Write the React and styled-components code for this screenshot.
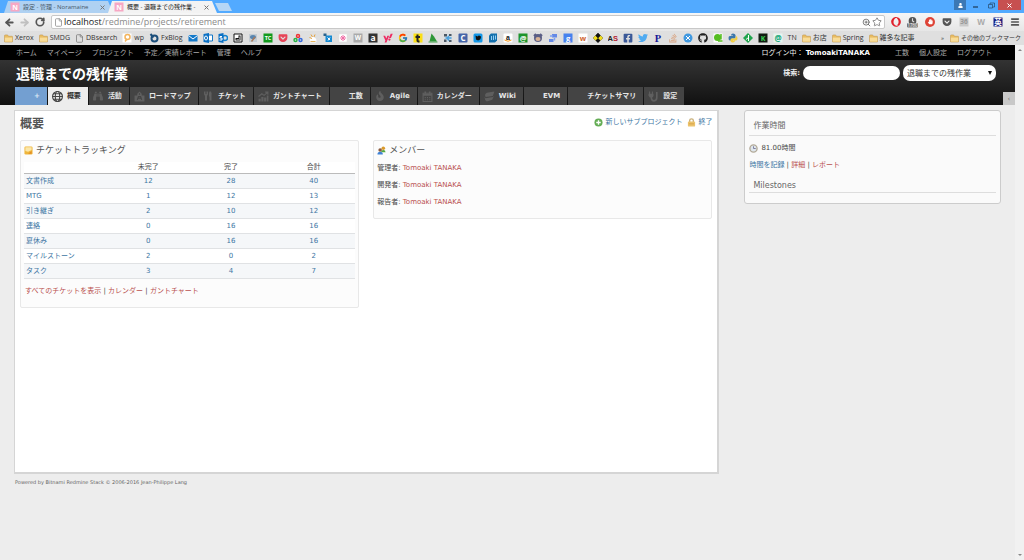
import React from "react";
import styled, { createGlobalStyle, css } from "styled-components";
import {
  FaYahoo,
  FaFacebookSquare,
  FaTwitter,
  FaGithub,
  FaGetPocket,
  FaStackOverflow,
  FaBinoculars,
  FaFire,
  FaOpera,
  FaHandPaper,
  FaUser
} from "react-icons/fa";
import { FcGoogle } from "react-icons/fc";
import { Star, ZoomIn, Menu, RotateCw, ArrowLeft, ArrowRight, File } from "lucide-react";

const GlobalStyle = createGlobalStyle`
  * {
    box-sizing: border-box;
  }

  body {
    margin: 0;
    background: #ededed;
    color: #484848;
    font-family: "DejaVu Sans", "Noto Sans CJK JP", sans-serif;
    font-size: 7px;
    line-height: 10px;
  }

  a {
    text-decoration: none;
  }

  h1, h2, h3, p, ul {
    margin: 0;
    padding: 0;
  }

  button {
    border: 0;
    padding: 0;
    background: none;
    font: inherit;
    color: inherit;
  }
`;

const Window = styled.div`
  display: flex;
  flex-direction: column;
  min-height: 100vh;
`;

/* browser chrome */

const Chrome = styled.header`
  font-family: "Open Sans", "Noto Sans CJK JP", sans-serif;
  color: #333;
`;

const TabStrip = styled.div`
  display: flex;
  align-items: flex-start;
  height: 13px;
  padding-left: 4px;
  background: #52aaff;
`;

const BrowserTab = styled.div`
  display: flex;
  align-items: center;
  gap: 3px;
  width: 109px;
  height: 12px;
  margin: 1px -5px 0 0;
  padding: 0 8px 0 6px;
  background: ${props => (props.$active ? "#f3f3f3" : "#afd1f2")};
  color: ${props => (props.$active ? "#222" : "#46586a")};
  clip-path: polygon(4px 0, calc(100% - 5px) 0, 100% 100%, 0 100%);
  font-size: 6px;

  span {
    flex: 1;
    white-space: nowrap;
  }

  svg {
    flex: none;
  }
`;

const NewTab = styled.button`
  width: 17px;
  height: 8px;
  margin: 3px 0 0 3px;
  background: #b5d6f5;
  clip-path: polygon(0 0, 13px 0, 100% 100%, 4px 100%);
`;

const WindowButtons = styled.div`
  display: flex;
  margin-left: auto;
  margin-right: 3px;
`;

const WindowButton = styled.button`
  display: flex;
  align-items: center;
  justify-content: center;
  width: ${props => props.$width || 14}px;
  height: 10px;
  background: ${props => props.$color || "none"};
  color: #fff;
`;

const Toolbar = styled.div`
  display: flex;
  align-items: center;
  height: 18px;
  padding: 0 4px;
  background: linear-gradient(#f6f6f6, #e6e6e6);
`;

const NavButtons = styled.div`
  display: flex;
  gap: 4px;
  margin-right: 6px;
`;

const ToolButton = styled.button`
  display: flex;
  width: 11px;
  height: 11px;
  align-items: center;
  justify-content: center;
  color: ${props => props.$color || "#555"};
`;

const AddressBar = styled.div`
  display: flex;
  flex: 1;
  align-items: center;
  gap: 1px;
  height: 14px;
  padding: 0 2px;
  background: #fff;
  border: 1px solid #c8c8c8;
  border-radius: 2px;
`;

const Address = styled.div`
  flex: 1;
  font-size: 9px;
  line-height: 12px;
  color: #8a8a8a;

  b {
    font-weight: normal;
    color: #222;
  }
`;

const Extensions = styled.div`
  display: flex;
  align-items: center;
  gap: 6px;
  margin-left: 5px;
`;

const BookmarkBar = styled.nav`
  display: flex;
  align-items: center;
  height: 14px;
  padding: 0 3px 0 4px;
  background: #dfdfdf;
`;

const Bookmark = styled.a`
  display: flex;
  align-items: center;
  gap: 2px;
  margin-right: 5px;
  color: #333;
  white-space: nowrap;

  svg {
    flex: none;
  }
`;

const MoreBookmarks = styled.div`
  display: flex;
  align-items: center;
  gap: 6px;
  margin-left: auto;
  font-size: 6px;

  ${Bookmark} {
    margin: 0;
  }
`;

/* page */

const Viewport = styled.div`
  display: flex;
  flex: 1;
`;

const Page = styled.div`
  flex: 1;
  min-width: 0;
`;

const Scrollbar = styled.div`
  display: flex;
  flex-direction: column;
  justify-content: space-between;
  align-items: center;
  width: 9px;
  padding: 3px 0;
  background: #f1f1f1;
`;

const TopMenu = styled.div`
  display: flex;
  align-items: center;
  height: 15px;
  padding: 0 23px 0 16px;
  background: #000;
  color: #eee;

  a {
    color: #aaa;
  }
`;

const MenuLinks = styled.nav`
  display: flex;
  gap: 10px;
`;

const Account = styled.div`
  margin-left: auto;
  margin-right: 25px;

  a {
    color: #fff;
    font-weight: bold;
  }
`;

const Header = styled.header`
  display: flex;
  flex-direction: column;
  justify-content: space-between;
  height: 45px;
  padding: 5px 0 0 15px;
  background: linear-gradient(#333, #111);
`;

const HeaderTop = styled.div`
  display: flex;
  justify-content: space-between;
  align-items: flex-start;
  padding-right: 19px;

  h1 {
    padding-left: 1px;
    font-size: 14px;
    line-height: 18px;
    color: #fff;
  }
`;

const Search = styled.form`
  display: flex;
  align-items: center;
  gap: 3px;

  label {
    color: #eee;
    font-weight: bold;
  }

  input {
    width: 97px;
    height: 14px;
    padding: 0 5px;
    border: 0;
    border-radius: 7px;
    background: #fff;
    font-size: 8px;
  }
`;

const SelectBox = styled.div`
  display: grid;
  align-items: center;

  select,
  svg {
    grid-area: 1 / 1;
  }

  select {
    appearance: none;
    width: 93px;
    height: 16px;
    padding: 0 4px;
    border: 0;
    border-radius: 7px;
    background: #fff;
    color: #333;
    font-family: "Noto Sans CJK JP", sans-serif;
    font-size: 8px;
    line-height: 12px;
  }

  svg {
    justify-self: end;
    margin-right: 4px;
  }
`;

const HeaderBottom = styled.div`
  display: flex;
  justify-content: space-between;
  align-items: flex-end;
`;

const ProjectMenu = styled.nav`
  display: flex;
  gap: 1px;
`;

const tabColors = {
  add: css`
    background: #739fd1;
    color: #dce8f5;
  `,
  active: css`
    background: #ededed;
    color: #333;
  `,
  normal: css`
    background: #444;
    color: #e6e6e6;
  `
};

const ProjectTab = styled.a`
  display: flex;
  align-items: center;
  gap: 3px;
  height: 18px;
  padding: 0 7px 0 4px;
  font-weight: bold;
  white-space: nowrap;
  ${props => tabColors[props.$kind || "normal"]}
`;

const TabIcon = styled.span`
  display: flex;
  width: 12px;
  color: ${props => (props.$active ? "#444" : "#5f5f5f")};
`;

const Collapse = styled.button`
  width: 12px;
  height: 13px;
  background: #c8c8c8;
  color: #777;
`;

const Columns = styled.div`
  display: flex;
  align-items: flex-start;
  gap: 25px;
  padding: 5px 14px 0;
`;

const Content = styled.main`
  flex: 1;
  min-height: 364px;
  padding: 5px;
  background: #fff;
  border: 1px solid #d5d5d5;
  border-right-width: 2px;
  border-bottom-width: 2px;
`;

const ContentHead = styled.div`
  display: flex;
  justify-content: space-between;
  align-items: flex-start;
  height: 24px;

  h2 {
    padding-top: 1px;
    font-size: 12px;
    line-height: 15px;
    color: #555;
  }
`;

const Contextual = styled.div`
  display: flex;
  gap: 5px;
  padding-top: 1px;
`;

const Link = styled.a`
  color: ${props => (props.$visited ? "#b9504f" : "#3d76a3")};
`;

const IconLink = styled(Link)`
  display: flex;
  align-items: center;
  gap: 2px;
`;

const Boxes = styled.div`
  display: grid;
  grid-template-columns: 1fr 1fr;
  align-items: start;
  gap: 14px;
`;

const Box = styled.section`
  padding: 3px 3px 11px;
  background: #fcfcfc;
  border: 1px solid #e8e8e8;
  border-radius: 2px;

  h3 {
    display: flex;
    align-items: center;
    gap: 3px;
    font-size: 9px;
    line-height: 12px;
    font-weight: normal;
    color: #555;
  }
`;

const Tracking = styled.table`
  width: 100%;
  margin-top: 6px;
  border-collapse: collapse;
  table-layout: fixed;
  text-align: center;

  th,
  td {
    padding: 0 2px;
    font-weight: normal;
  }

  thead tr {
    height: 11px;
    background: #fff;
    border-bottom: 1px solid #bbb;
  }

  tbody tr {
    height: 15px;
    background: #fff;
    border-bottom: 1px solid #e0e2e4;
  }

  tbody tr:nth-child(odd) {
    background: #f5f7f9;
  }

  tbody th {
    text-align: left;
    white-space: nowrap;
  }
`;

const BoxLinks = styled.p`
  padding: 7px 1px 0;
`;

const Member = styled.p`
  padding: 7px 0 0;
`;

const Sidebar = styled.aside`
  flex: 0 0 26%;
  padding: 9px 4px 10px;
  background: #fafafa;
  border: 1px solid #ccc;
  border-radius: 3px;

  h3 {
    padding: 0 4px 3px;
    font-size: 8px;
    line-height: 12px;
    font-weight: normal;
    color: #666;
    border-bottom: 1px solid #ddd;
  }

  h3 + p {
    margin-top: 7px;
  }

  p + h3 {
    margin-top: 10px;
    padding-bottom: 0;
  }
`;

const Hours = styled.p`
  display: flex;
  align-items: center;
  gap: 3px;
`;

const TimeLinks = styled.p`
  margin-top: 7px;
`;

const Footer = styled.footer`
  padding: 3px 15px;
  font-size: 5px;
  color: #666;
`;

/* icons */

const Icon = ({ size = 10, box = 20, children }) => (
  <svg width={size} height={size} viewBox={`0 0 ${box} ${box}`} aria-hidden="true">
    {children}
  </svg>
);

const Letter = ({ bg, color = "#fff", family = "Open Sans", round = 0, size = 16, children }) => (
  <Icon>
    <rect x="1" y="1" width="18" height="18" rx={round} fill={bg} />
    <text
      x="10"
      y={10 + size * 0.36}
      textAnchor="middle"
      fontSize={size}
      fontWeight="bold"
      fontFamily={family}
      fill={color}
    >
      {children}
    </text>
  </Icon>
);

const Folder = () => (
  <Icon size={9}>
    <path d="M1 4q0-2 2-2h5l2 3h8q1 0 1 1v11q0 1-1 1H2q-1 0-1-1z" fill="#e9bd62" stroke="#b98b3c" />
    <path d="M2 8h16v9H2z" fill="#f8dc98" />
  </Icon>
);

const Noramaine = () => (
  <Letter bg="#f7a8c4" size={14}>
    N
  </Letter>
);

const CloseMark = ({ color = "#777" }) => (
  <Icon size={5} box={10}>
    <path d="M1 1l8 8M9 1l-8 8" stroke={color} strokeWidth="2" />
  </Icon>
);

const Badge = () => (
  <Icon size={12}>
    <circle cx="10" cy="8" r="7" fill="#555" />
    <path d="M10 3v5l3 2" stroke="#ddd" strokeWidth="2" fill="none" />
    <rect x="0" y="12" width="20" height="8" rx="2" fill="#777" />
    <text x="10" y="19" fontSize="8" textAnchor="middle" fill="#fff" fontFamily="Open Sans">
      1760
    </text>
  </Icon>
);

const bookmarks = [
  { text: "Xerox", icon: <Folder /> },
  { text: "SMDG", icon: <Folder /> },
  { text: "DBsearch", icon: <File size={9} color="#777" /> },
  {
    text: "wp",
    icon: (
      <Icon>
        <path d="M1 1h18v18H1z" fill="#fff" />
        <circle cx="11" cy="8" r="5" fill="none" stroke="#f3b45d" strokeWidth="3" />
        <path d="M6 17l4-5" stroke="#f3b45d" strokeWidth="3" />
      </Icon>
    )
  },
  {
    text: "FxBlog",
    icon: (
      <Icon>
        <circle cx="11" cy="11" r="6" fill="none" stroke="#1d4f7b" strokeWidth="4" />
        <path d="M3 2l6 7" stroke="#1d4f7b" strokeWidth="4" />
      </Icon>
    )
  },
  {
    icon: (
      <Icon>
        <path d="M1 4h18v13H1z" fill="#1479c9" />
        <path d="M1 5l9 7 9-7" stroke="#fff" strokeWidth="2" fill="none" />
      </Icon>
    )
  },
  {
    icon: (
      <Icon>
        <path d="M9 4h10v12H9z" fill="#fff" stroke="#1376c5" strokeWidth="2" />
        <path d="M1 2l11-2v20L1 18z" fill="#0b70c4" />
        <ellipse cx="6" cy="10" rx="3" ry="4" fill="none" stroke="#fff" strokeWidth="2" />
      </Icon>
    )
  },
  {
    icon: (
      <Icon>
        <circle cx="14" cy="10" r="5" fill="none" stroke="#1685d1" strokeWidth="3" />
        <path d="M1 2l10-2v20L1 18z" fill="#0b70c4" />
        <path d="M8 7H4v3h4v4H3" fill="none" stroke="#fff" strokeWidth="2" />
      </Icon>
    )
  },
  {
    icon: (
      <Icon>
        <path d="M2 2h16v16H2z" fill="#fff" stroke="#111" strokeWidth="2" />
        <path d="M5 15h10V5h-4v5H5z" fill="#111" />
        <path d="M7 13h6M13 7v6" stroke="#fff" />
      </Icon>
    )
  },
  {
    icon: (
      <Icon>
        <path d="M2 2h16v16H2z" fill="#c3ccd4" />
        <ellipse cx="10" cy="8" rx="6" ry="4" fill="#5885b0" />
        <path d="M7 17L14 8" stroke="#a8795a" strokeWidth="3" />
      </Icon>
    )
  },
  { icon: <Letter bg="#129a1d" size={11}>TC</Letter> },
  { icon: <FaGetPocket size={10} color="#e74457" /> },
  {
    icon: (
      <Icon>
        <circle cx="10" cy="6" r="3" fill="none" stroke="#e33" strokeWidth="3" />
        <circle cx="5" cy="14" r="3" fill="none" stroke="#29b345" strokeWidth="3" />
        <circle cx="15" cy="14" r="3" fill="none" stroke="#3569dc" strokeWidth="3" />
      </Icon>
    )
  },
  {
    icon: (
      <Icon>
        <path d="M4 19q-2-9 4-12l5 2q6 4 3 10z" fill="#fff" />
        <path d="M3 9l5 2M6 3l3 5M14 3l-2 5" stroke="#e4a13c" strokeWidth="2" />
        <path d="M5 17h10" stroke="#e9b65f" strokeWidth="2" />
      </Icon>
    )
  },
  {
    icon: (
      <Icon>
        <path d="M5 5h13v13H5z" fill="#168ad2" />
        <path d="M1 1h6v5H1z" fill="#2b638c" />
        <path d="M9 9l5 5M14 9l-4 6" stroke="#fff" strokeWidth="2" />
      </Icon>
    )
  },
  {
    icon: (
      <Icon>
        <path d="M2 2h16v16H2z" fill="#fff" stroke="#ddd" />
        <path d="M10 4v12M4 10h12M6 6l8 8M14 6l-8 8" stroke="#f06da5" strokeWidth="2" />
      </Icon>
    )
  },
  { icon: <Letter bg="#aaa" size={13}>W</Letter> },
  { icon: <Letter bg="#333" size={17}>a</Letter> },
  { icon: <FaYahoo size={10} color="#ed2b63" /> },
  { icon: <FcGoogle size={10} /> },
  {
    icon: (
      <Icon>
        <path d="M1 1h18v18H1z" fill="#fbdf15" />
        <path d="M9 3v12q0 2 4 2M5 8h9" stroke="#222" strokeWidth="4" fill="none" />
      </Icon>
    )
  },
  {
    icon: (
      <Icon>
        <path d="M3 17L7 1l5 6 6 10z" fill="#2e9738" />
        <path d="M1 18h18" stroke="#49a34e" strokeWidth="2" />
      </Icon>
    )
  },
  {
    icon: (
      <Icon>
        <path d="M2 2h16v16H2z" fill="#cfdbe4" />
        <path d="M2 2h6v5H2zM12 2h5v4h-5zM2 13h5v5H2zM12 14h5v4h-5z" fill="#4c5864" />
        <path d="M5 10h12M12 6l-4 4 4 5" stroke="#49a0dd" strokeWidth="3" fill="none" />
      </Icon>
    )
  },
  { icon: <Letter bg="#4564a8" round={2}>C</Letter> },
  {
    icon: (
      <Icon>
        <rect x="1" y="1" width="18" height="18" rx="3" fill="#1698e8" />
        <path d="M5 5l4 2q3-3 5-1l2 1q0 7-6 8l-4-2z" fill="#111" />
      </Icon>
    )
  },
  {
    icon: (
      <Icon>
        <path d="M6 1h12v14l-4 4H2V5z" fill="#1470ad" />
        <path d="M7 6v8M11 5v9M15 5v8" stroke="#94cef2" strokeWidth="2" />
      </Icon>
    )
  },
  {
    icon: (
      <Icon>
        <rect x="1" y="1" width="18" height="18" rx="2" fill="#fff" />
        <text
          x="10"
          y="13"
          fontSize="14"
          fontWeight="bold"
          fontFamily="Liberation Sans"
          textAnchor="middle"
          fill="#111"
        >
          a
        </text>
        <path d="M3 14q7 5 14 0" stroke="#f69a1d" strokeWidth="2" fill="none" />
      </Icon>
    )
  },
  { icon: <Letter bg="#1d942b" size={15}>@</Letter> },
  {
    icon: (
      <Icon>
        <circle cx="10" cy="10" r="8" fill="#5b5f86" />
        <ellipse cx="10" cy="12" rx="5" ry="4" fill="#d9b395" />
        <path d="M2 6l4-4M18 6l-4-4" stroke="#5b5f86" strokeWidth="4" />
      </Icon>
    )
  },
  {
    icon: (
      <Icon>
        <path d="M8 2h10v7H8zM2 12h9v6H2z" fill="#6489e5" />
        <path d="M4 6h6M13 10v5" stroke="#7da1f4" strokeWidth="3" />
      </Icon>
    )
  },
  { icon: <Letter bg="#4782ee" size={15}>g</Letter> },
  { icon: <Letter bg="#fff" color="#cf642d" size={15}>w</Letter> },
  {
    icon: (
      <Icon>
        <path d="M10 0l10 10-10 10L0 10z" fill="#111" />
        <path d="M10 10l5-5 5 5-5 5zM5 5l5 5-5 5-5-5z" fill="#f1dc19" />
        <path d="M10 0l5 5-5 5-5-5z" fill="#111" />
      </Icon>
    )
  },
  {
    icon: (
      <Icon>
        <text x="-1" y="16" fontSize="15" fontWeight="bold" fontFamily="Liberation Sans" fill="#222">
          A<tspan fill="#b2202f">S</tspan>
        </text>
      </Icon>
    )
  },
  { icon: <FaFacebookSquare size={10} color="#3b5998" /> },
  { icon: <FaTwitter size={10} color="#50abf1" /> },
  {
    icon: (
      <Letter bg="none" color="#171796" family="Liberation Serif" size={21}>
        P
      </Letter>
    )
  },
  { icon: <FaStackOverflow size={10} color="#d9a27e" /> },
  {
    icon: (
      <Icon>
        <circle cx="10" cy="10" r="9" fill="#3f98e0" />
        <path d="M6 6l8 8M14 6l-8 8" stroke="#fff" strokeWidth="2" />
      </Icon>
    )
  },
  { icon: <FaGithub size={10} color="#222" /> },
  {
    icon: (
      <Icon>
        <rect x="1" y="1" width="18" height="18" fill="#fff" />
        <circle cx="9" cy="9" r="7" fill="#55bd20" />
        <path d="M10 16h9M16 2v11" stroke="#55bd20" strokeWidth="3" />
      </Icon>
    )
  },
  {
    icon: (
      <Icon>
        <path d="M6 5q0-4 4-4t5 3v5q0 2-3 2H8q-2 0-2 4H4q-3 0-3-5t4-4h5V5z" fill="#3b77ab" />
        <path d="M14 15q0 4-4 4t-5-3v-3q0-2 3-2h5q3 0 3-5 3 0 3 5t-4 4h-5v1z" fill="#f3cf43" />
      </Icon>
    )
  },
  {
    icon: (
      <Icon>
        <path d="M10 0l10 10-10 10L0 10z" fill="#20a44d" />
        <path d="M11 4v12M11 9l-5 4" stroke="#fff" strokeWidth="2" />
      </Icon>
    )
  },
  { icon: <Letter bg="#121c12" color="#38d154" size={14}>K</Letter> },
  { icon: <Letter bg="#e7f5ef" color="#16a679" size={16}>@</Letter> },
  { text: "TN" },
  { text: "お店", icon: <Folder /> },
  { text: "Spring", icon: <Folder /> },
  { text: "雑多な記事", icon: <Folder /> }
];

const tabIcons = {
  globe: (
    <Icon size={11}>
      <g fill="none" stroke="currentColor" strokeWidth="2">
        <circle cx="10" cy="10" r="9" />
        <ellipse cx="10" cy="10" rx="4" ry="9" />
        <path d="M1 10h18M3 5h14M3 15h14" />
      </g>
    </Icon>
  ),
  binoculars: <FaBinoculars size={10} />,
  road: (
    <Icon size={11}>
      <path d="M1 8h5V5l4-4 4 4v3h5v11H1z" fill="currentColor" />
      <path d="M10 4v3M6 16l2-6h4l2 6M8 13h4" stroke="#444" strokeWidth="2" fill="none" />
    </Icon>
  ),
  tools: (
    <Icon size={10}>
      <path
        d="M2 1v5q0 3 2 3v10h4V9q2 0 2-3V1H8v5H7V1H5v5H4V1zM13 1h3q2 3 1 9v9h-4v-8h-1V4z"
        fill="currentColor"
      />
    </Icon>
  ),
  chart: (
    <Icon size={11}>
      <path d="M1 14h4v5H1zM6 11h4v8H6zM11 12h4v7h-4zM16 8h3v11h-3z" fill="currentColor" />
      <path d="M1 10l6-5 4 3 7-6M13 2h5v5" stroke="currentColor" strokeWidth="2" fill="none" />
    </Icon>
  ),
  fire: <FaFire size={10} />,
  calendar: (
    <Icon size={11}>
      <path d="M2 4h16v15H2z" fill="none" stroke="currentColor" strokeWidth="2" />
      <path d="M2 7h16M6 1v4M14 1v4" stroke="currentColor" strokeWidth="3" />
      <path d="M5 12h10M5 16h10" stroke="currentColor" strokeWidth="2" strokeDasharray="2 2" />
    </Icon>
  ),
  wiki: (
    <Icon size={11}>
      <path d="M5 3l14-2-3 8-13 2q-3-5 2-8zM1 11l2 2 13-2 2-2-3 7-10 3q-4-2-4-8z" fill="currentColor" />
    </Icon>
  ),
  plug: (
    <Icon size={11}>
      <path d="M3 1v5M8 1v5" stroke="currentColor" strokeWidth="2" />
      <path d="M1 5h9v3q0 4-4 4T1 8z" fill="currentColor" />
      <path d="M6 11q0 7 5 7t5-6V2" stroke="currentColor" strokeWidth="3" fill="none" />
    </Icon>
  )
};

const projectTabs = [
  { label: "+", kind: "add" },
  { label: "概要", icon: "globe", kind: "active" },
  { label: "活動", icon: "binoculars" },
  { label: "ロードマップ", icon: "road" },
  { label: "チケット", icon: "tools" },
  { label: "ガントチャート", icon: "chart" },
  { label: "工数" },
  { label: "Agile", icon: "fire" },
  { label: "カレンダー", icon: "calendar" },
  { label: "Wiki", icon: "wiki" },
  { label: "EVM" },
  { label: "チケットサマリ" },
  { label: "設定", icon: "plug" }
];

const trackers = [
  ["文書作成", 12, 28, 40],
  ["MTG", 1, 12, 13],
  ["引き継ぎ", 2, 10, 12],
  ["連絡", 0, 16, 16],
  ["夏休み", 0, 16, 16],
  ["マイルストーン", 2, 0, 2],
  ["タスク", 3, 4, 7]
];

const BrowserChrome = () => (
  <Chrome>
    <TabStrip>
      <BrowserTab>
        <Noramaine />
        <span>設定 - 管理 - Noramaine</span>
        <CloseMark />
      </BrowserTab>
      <BrowserTab $active>
        <Noramaine />
        <span>概要 - 退職までの残作業 -</span>
        <CloseMark />
      </BrowserTab>
      <NewTab aria-label="New tab" />
      <WindowButtons>
        <WindowButton aria-label="User" $color="#3c78b4" $width={12}>
          <FaUser size={5} />
        </WindowButton>
        <WindowButton aria-label="Minimize" $width={18}>
          <Icon size={5} box={5}>
            <path d="M0 4h5" stroke="#123" strokeWidth="1" />
          </Icon>
        </WindowButton>
        <WindowButton aria-label="Restore">
          <Icon size={7} box={14}>
            <path d="M4 4V2h9v8h-3M1 5h8v7H1z" stroke="#123" strokeWidth="1" fill="none" />
          </Icon>
        </WindowButton>
        <WindowButton aria-label="Close" $color="#c75050" $width={23}>
          <CloseMark color="#fff" />
        </WindowButton>
      </WindowButtons>
    </TabStrip>
    <Toolbar>
      <NavButtons>
        <ToolButton aria-label="Back">
          <ArrowLeft size={11} strokeWidth={4} />
        </ToolButton>
        <ToolButton aria-label="Forward" $color="#c0c0c0">
          <ArrowRight size={11} strokeWidth={4} />
        </ToolButton>
        <ToolButton aria-label="Reload">
          <RotateCw size={10} strokeWidth={4} />
        </ToolButton>
      </NavButtons>
      <AddressBar>
        <File size={9} color="#888" />
        <Address>
          <b>localhost</b>/redmine/projects/retirement
        </Address>
        <ZoomIn size={9} color="#555" />
        <Star size={10} color="#777" />
      </AddressBar>
      <Extensions>
        <ToolButton aria-label="Opera" $color="#e0202c">
          <FaOpera size={10} />
        </ToolButton>
        <ToolButton aria-label="Clock">
          <Badge />
        </ToolButton>
        <ToolButton aria-label="Block">
          <Icon>
            <circle cx="10" cy="10" r="10" fill="#de4437" />
            <FaHandPaper x="5" y="4" size={11} color="#fff" />
          </Icon>
        </ToolButton>
        <ToolButton aria-label="Pocket">
          <FaGetPocket size={10} />
        </ToolButton>
        <ToolButton aria-label="Feeds">
          <Letter bg="#c9c9c9" color="#999" size={13}>
            36
          </Letter>
        </ToolButton>
        <ToolButton aria-label="Wiki">
          <Letter bg="none" color="#aaa" size={16}>
            W
          </Letter>
        </ToolButton>
        <ToolButton aria-label="Dictionary">
          <Letter bg="#1c2180" size={15} family="Noto Sans CJK JP">
            英
          </Letter>
        </ToolButton>
        <ToolButton aria-label="Menu">
          <Menu size={10} strokeWidth={4} />
        </ToolButton>
      </Extensions>
    </Toolbar>
    <BookmarkBar>
      {bookmarks.map(({ text, icon }, i) => (
        <Bookmark href="#" key={i}>
          {icon}
          {text}
        </Bookmark>
      ))}
      <MoreBookmarks>
        <span>»</span>
        <Bookmark href="#">
          <Folder />
          その他のブックマーク
        </Bookmark>
      </MoreBookmarks>
    </BookmarkBar>
  </Chrome>
);

const PageHeader = () => (
  <>
    <TopMenu>
      <MenuLinks>
        <a href="#">ホーム</a>
        <a href="#">マイページ</a>
        <a href="#">プロジェクト</a>
        <a href="#">予定／実績レポート</a>
        <a href="#">管理</a>
        <a href="#">ヘルプ</a>
      </MenuLinks>
      <Account>
        ログイン中： <a href="#">TomoakiTANAKA</a>
      </Account>
      <MenuLinks>
        <a href="#">工数</a>
        <a href="#">個人設定</a>
        <a href="#">ログアウト</a>
      </MenuLinks>
    </TopMenu>
    <Header>
      <HeaderTop>
        <h1>退職までの残作業</h1>
        <Search>
          <label htmlFor="q">検索:</label>
          <input id="q" type="text" />
          <SelectBox>
            <select aria-label="プロジェクト">
              <option>退職までの残作業</option>
            </select>
            <Icon size={4} box={4}>
              <path d="M0 0h4L2 4z" fill="#111" />
            </Icon>
          </SelectBox>
        </Search>
      </HeaderTop>
      <HeaderBottom>
        <ProjectMenu>
          {projectTabs.map(tab => (
            <ProjectTab href="#" key={tab.label} $kind={tab.kind}>
              <TabIcon $active={tab.kind === "active"}>{tabIcons[tab.icon]}</TabIcon>
              {tab.label}
            </ProjectTab>
          ))}
        </ProjectMenu>
        <Collapse aria-label="サイドバー">‹</Collapse>
      </HeaderBottom>
    </Header>
  </>
);

const IssueTracking = () => (
  <Box>
    <h3>
      <Icon size={9}>
        <rect x="1" y="1" width="18" height="18" rx="3" fill="#efb63c" />
        <path d="M3 3h14v6l-8 4-6-2z" fill="#fbe7a9" />
        <path d="M9 17l8-6v6z" fill="#e28b25" />
      </Icon>
      チケットトラッキング
    </h3>
    <Tracking>
      <thead>
        <tr>
          <td />
          <th scope="col">未完了</th>
          <th scope="col">完了</th>
          <th scope="col">合計</th>
        </tr>
      </thead>
      <tbody>
        {trackers.map(([name, ...counts]) => (
          <tr key={name}>
            <th scope="row">
              <Link href="#">{name}</Link>
            </th>
            {counts.map((count, i) => (
              <td key={i}>
                <Link href="#">{count}</Link>
              </td>
            ))}
          </tr>
        ))}
      </tbody>
    </Tracking>
    <BoxLinks>
      <Link href="#" $visited>すべてのチケットを表示</Link> |{" "}
      <Link href="#" $visited>カレンダー</Link> |{" "}
      <Link href="#" $visited>ガントチャート</Link>
    </BoxLinks>
  </Box>
);

const Members = () => (
  <Box>
    <h3>
      <Icon size={9}>
        <circle cx="14" cy="5" r="4" fill="#d99a2b" />
        <path d="M9 14q0-5 5-5t5 5z" fill="#55a83e" />
        <circle cx="7" cy="9" r="4" fill="#8a5a3c" />
        <path d="M1 19q0-6 6-6t6 6z" fill="#3f82d6" />
      </Icon>
      メンバー
    </h3>
    {["管理者", "開発者", "報告者"].map(role => (
      <Member key={role}>
        {role}: <Link href="#" $visited>Tomoaki TANAKA</Link>
      </Member>
    ))}
  </Box>
);

const App = () => (
  <Window>
    <GlobalStyle />
    <BrowserChrome />
    <Viewport>
      <Page>
        <PageHeader />
        <Columns>
          <Content>
            <ContentHead>
              <h2>概要</h2>
              <Contextual>
                <IconLink href="#">
                  <Icon size={9}>
                    <circle cx="10" cy="10" r="9" fill="#64ad55" />
                    <path d="M10 5v10M5 10h10" stroke="#fff" strokeWidth="3" />
                  </Icon>
                  新しいサブプロジェクト
                </IconLink>
                <IconLink href="#">
                  <Icon size={9}>
                    <path d="M6 9V5q0-3 4-3t4 3v4" fill="none" stroke="#c9b07a" strokeWidth="3" />
                    <rect x="2" y="8" width="16" height="11" rx="2" fill="#ecc36d" />
                    <path d="M4 13h12" stroke="#d6a244" strokeWidth="2" />
                  </Icon>
                  終了
                </IconLink>
              </Contextual>
            </ContentHead>
            <Boxes>
              <IssueTracking />
              <Members />
            </Boxes>
          </Content>
          <Sidebar>
            <h3>作業時間</h3>
            <Hours>
              <Icon size={9}>
                <circle cx="10" cy="10" r="8" fill="#dfe7ee" stroke="#b3aa98" strokeWidth="3" />
                <path d="M10 5v5h5" stroke="#779" strokeWidth="2" fill="none" />
              </Icon>
              81.00時間
            </Hours>
            <TimeLinks>
              <Link href="#">時間を記録</Link> | <Link href="#" $visited>詳細</Link> |{" "}
              <Link href="#" $visited>レポート</Link>
            </TimeLinks>
            <h3>Milestones</h3>
          </Sidebar>
        </Columns>
        <Footer>Powered by Bitnami Redmine Stack © 2006-2016 Jean-Philippe Lang</Footer>
      </Page>
      <Scrollbar>
        <Icon size={4} box={4}>
          <path d="M0 3h4L2 1z" fill="#888" />
        </Icon>
        <Icon size={4} box={4}>
          <path d="M0 1h4L2 3z" fill="#888" />
        </Icon>
      </Scrollbar>
    </Viewport>
  </Window>
);

export default App;
